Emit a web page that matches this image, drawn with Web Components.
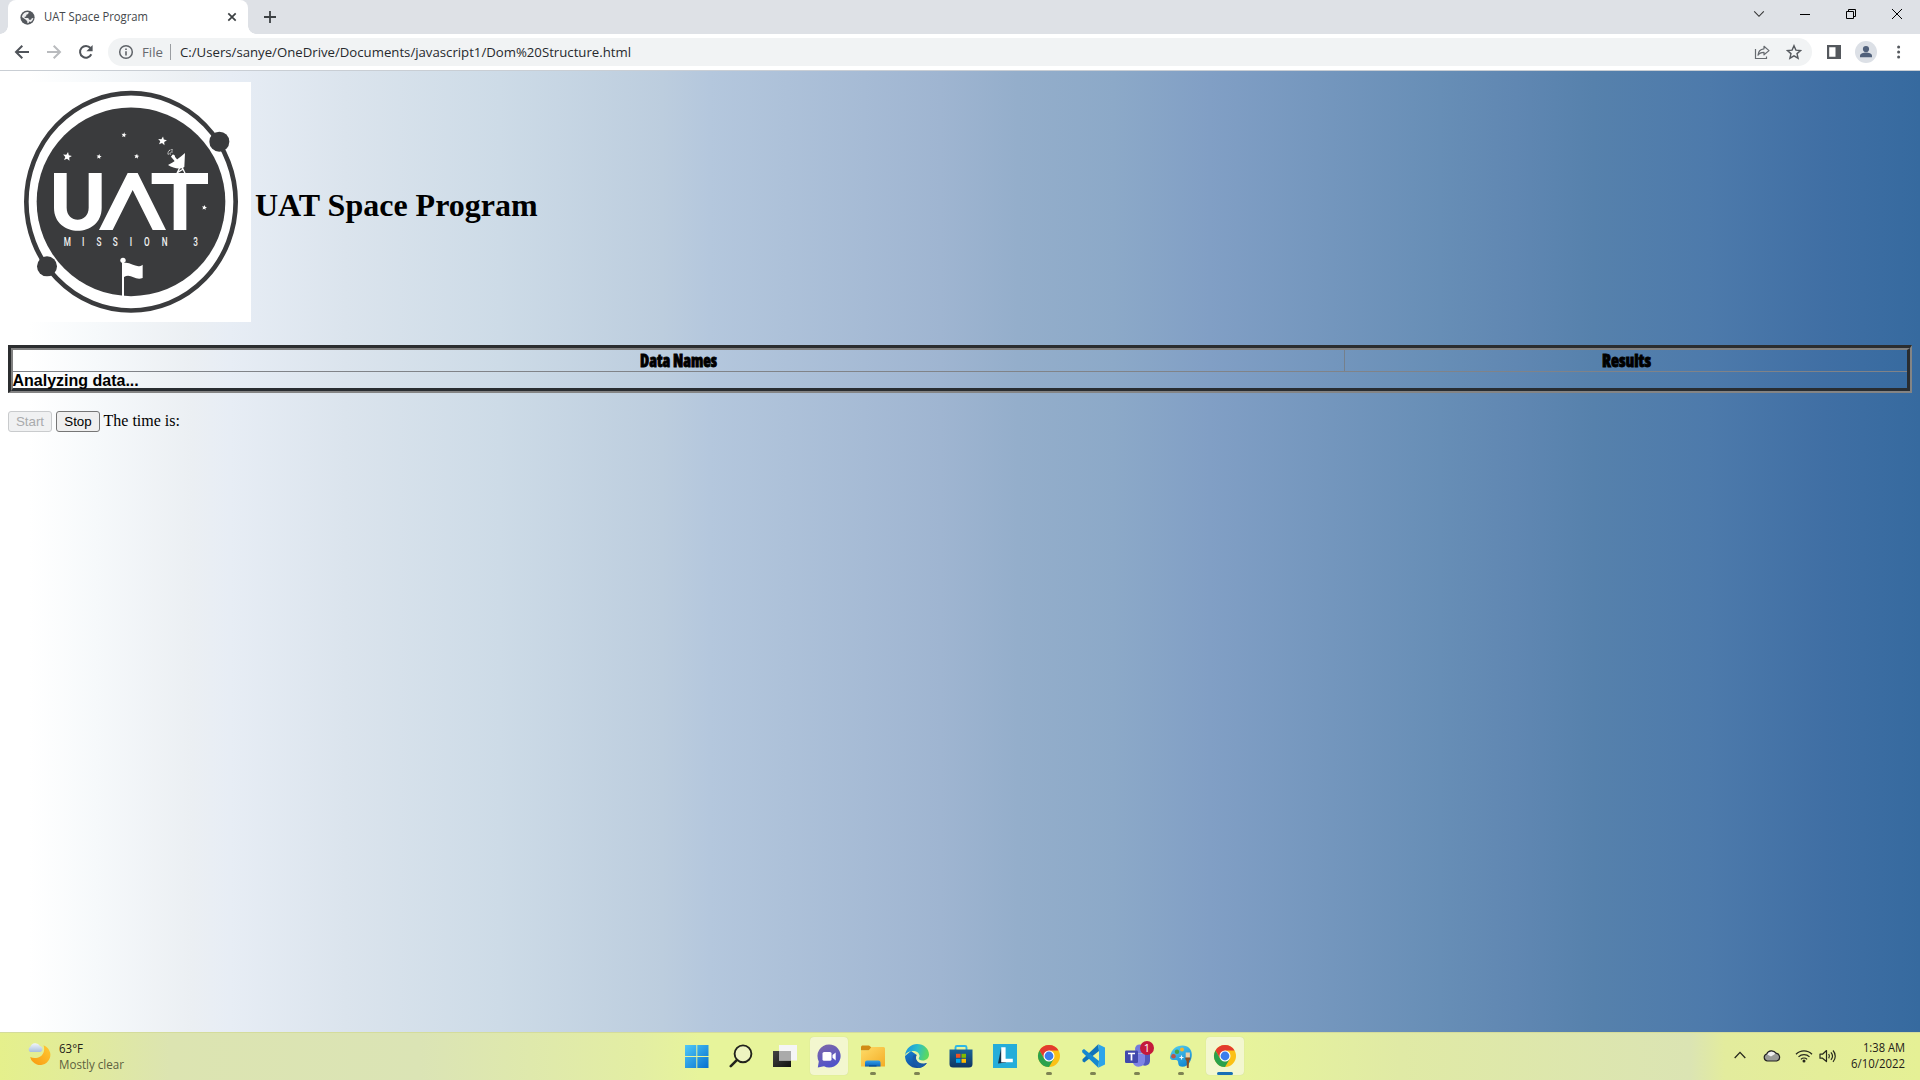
<!DOCTYPE html>
<html lang="en">
<head>
<meta charset="utf-8">
<title>UAT Space Program</title>
<style>
html,body{margin:0;padding:0;width:1920px;height:1080px;overflow:hidden}
</style>
</head>
<body>
<desktop-screen></desktop-screen>
<script>
const define=(name,html,after)=>{
  const t=document.createElement('template');t.innerHTML=html;
  customElements.define(name,class extends HTMLElement{
    connectedCallback(){
      if(this.shadowRoot)return;
      this.attachShadow({mode:'open'}).appendChild(t.content.cloneNode(true));
      if(after)after(this,this.shadowRoot);
    }
  });
};

/* Text squeezed or stretched horizontally to an exact width: <fit-text w="80"> */
define('fit-text',`<style>
:host{display:block;white-space:nowrap;flex:none}
span{display:inline-block;transform-origin:0 50%;white-space:nowrap}
</style><span><slot></slot></span>`,(el,root)=>{
  const s=root.querySelector('span'),w=+el.getAttribute('w');
  el.style.width=w+'px';
  s.style.transform='scaleX('+(w/s.getBoundingClientRect().width)+')';
});

/* Icon set */
const chromeIcon=`<circle cx="12" cy="12" r="11" fill="#fbc116"/><path d="M12 1a11 11 0 0 1 9.530 5.500H12L7.300 14.700 2.470 6.500A11 11 0 0 1 12 1Z" fill="#e33b2e"/><path d="M2.470 6.500 7.200 14.700 12 17.500 16.800 14.800 12 23A11 11 0 0 1 2.470 6.500Z" fill="#2ba24c"/><circle cx="12" cy="12" r="5.500" fill="#fff"/><circle cx="12" cy="12" r="4.400" fill="#3b7ded"/>`;
const icons={
globe:['0 0 16 16','<circle cx="8" cy="8" r="7.600" fill="#54585d"/><path d="M9.300 2.200 8.700 4.200 6.800 5 6.500 6.800 4.900 7.300 5 8.500h3.800l.9 1.900 2-.1.900-1.500 1.700-.2a6 6 0 0 1-2.600 4.300l-1.900-.6-.6 1.500-1.300.3-.2-2.200-1.500-1.600L2 7.500A6 6 0 0 1 9.300 2.200Z" fill="#fff" opacity=".9"/>'],
x:['0 0 16 16','<path d="m4.300 4.300 7.400 7.400m0-7.400-7.400 7.400" stroke="#3c4043" stroke-width="1.700"/>'],
plus:['0 0 16 16','<path d="M8 2v12M2 8h12" stroke="#3c4043" stroke-width="1.800"/>'],
back:['0 0 16 16','<path d="M15 8H2.500M8.300 1.700 2 8l6.300 6.300" stroke="#50545a" stroke-width="2" fill="none"/>'],
fwd:['0 0 16 16','<path d="M1 8h12.500M7.700 1.700 14 8l-6.300 6.300" stroke="#b9bbbe" stroke-width="2" fill="none"/>'],
reload:['0 0 16 16','<path d="M13.300 10.300A5.900 5.900 0 1 1 12.500 4" fill="none" stroke="#50545a" stroke-width="2"/><path d="M14.600 1v6.200H8.400Z" fill="#50545a"/>'],
info:['0 0 16 16','<circle cx="8" cy="8" r="6.300" fill="none" stroke="#5f6368" stroke-width="1.500"/><path d="M8 7.200v4.200M8 4.400v1.700" stroke="#5f6368" stroke-width="1.600"/>'],
chev:['0 0 12 12','<path d="m1.200 3.300 4.800 5 4.800-5" fill="none" stroke="#333" stroke-width="1.100"/>'],
min:['0 0 12 12','<path d="M1 6.500h10" stroke="#000" stroke-width="1"/>'],
restore:['0 0 12 12','<path d="M1.500 3.500h7v7h-7zM3.500 3.500v-2h7v7h-2" fill="none" stroke="#000" stroke-width="1"/>'],
close:['0 0 12 12','<path d="m1 1 10 10M11 1 1 11" stroke="#000" stroke-width="1"/>'],
share:['0 0 16 16','<path d="M1.500 5v9.500h11v-2" fill="none" stroke="#676b70" stroke-width="1.200"/><path d="M10 2.300 15 6.600l-5 4.200V8.300c-3 0-4.900.8-6 2.900.2-3.400 2.300-6 6-6.400Z" fill="none" stroke="#676b70" stroke-width="1.200" stroke-linejoin="round"/>'],
star:['0 0 16 16','<path d="m8 1.700 1.900 4.400 4.700.4-3.600 3.100 1.100 4.600L8 11.800l-4.100 2.400L5 9.600 1.400 6.500l4.700-.4Z" fill="none" stroke="#55595e" stroke-width="1.400"/>'],
panel:['0 0 14 14','<path d="M0 0h14v14H0ZM2.200 2.200v9.600h6.300V2.200Z" fill="#54585d" fill-rule="evenodd"/>'],
user:['0 0 22 22','<circle cx="11" cy="11" r="11" fill="#dce0e6"/><circle cx="11" cy="8" r="3.100" fill="#51617b"/><path d="M5 16.300v-1.500c0-2.200 3.500-3.300 6-3.300s6 1.100 6 3.300v1.500Z" fill="#51617b"/>'],
dots:['0 0 16 16','<g fill="#54585d"><circle cx="7.600" cy="3" r="1.500"/><circle cx="7.600" cy="8" r="1.500"/><circle cx="7.600" cy="13" r="1.500"/></g>'],
weather:['0 0 24 24','<defs><linearGradient id="a" x1="1" x2="0" y2="1"><stop stop-color="#ffcb35"/><stop offset="1" stop-color="#f8980f"/></linearGradient><linearGradient id="b" x2="0" y2="1"><stop stop-color="#f1f5fa"/><stop offset="1" stop-color="#a9c0dd"/></linearGradient></defs><path d="M16.500 3.200c2 5.500-.5 11.300-6 12.500a11 11 0 0 1-7.300-.8A10.200 10.200 0 1 0 16.500 3.200Z" fill="url(#a)"/><path d="M3 10a3 3 0 0 1 .3-5.200A5.300 5.300 0 0 1 13 4a3.100 3.100 0 0 1 .3 6Z" fill="url(#b)"/>'],
win:['0 0 24 24','<defs><linearGradient id="a" x2="1" y2="1"><stop stop-color="#4fc9f8"/><stop offset="1" stop-color="#0670cf"/></linearGradient></defs><path d="M0 1h11.300v11H0Zm12.300 0H23.500v11H12.300ZM0 13h11.300v11H0Zm12.300 0H23.500v11H12.300Z" fill="url(#a)"/>'],
search:['0 0 24 24','<circle cx="14" cy="9.800" r="8.400" fill="#edf4c0" stroke="#22231c" stroke-width="1.900"/><path d="m7.800 16.200-6 6" stroke="#22231c" stroke-width="2.600" stroke-linecap="round"/>'],
task:['0 0 24 24','<defs><linearGradient id="a" x2="1" y2="1"><stop stop-color="#444"/><stop offset="1" stop-color="#111"/></linearGradient></defs><path d="M0 7h18v16H0Z" fill="url(#a)"/><path d="M6 1h18v15.500H6Z" fill="#f5f5f5"/><path d="M6 7h12v9.500H6Z" fill="#aaa"/>'],
chat:['0 0 24 24','<defs><linearGradient id="a" x2=".4" y2="1"><stop stop-color="#8068a8"/><stop offset="1" stop-color="#5053c9"/></linearGradient></defs><path d="M12 .500a11.500 11.500 0 1 1-5 21.800L.800 23.400l1-6A11.500 11.500 0 0 1 12 .500Z" fill="url(#a)"/><rect x="5.500" y="8" width="9" height="8.800" rx="1.600" fill="#fff"/><path d="m15.500 11 3.200-2.600v8l-3.200-2.600Z" fill="#fff"/>'],
folder:['0 0 24 24','<defs><linearGradient id="a" x2="1" y2="1"><stop stop-color="#ffdc68"/><stop offset="1" stop-color="#f3ad27"/></linearGradient><linearGradient id="b" x2="0" y2="1"><stop stop-color="#34a1e9"/><stop offset="1" stop-color="#0961b8"/></linearGradient></defs><path d="M0 3.500C0 2 .7 1.500 2 1.500h6L10.500 3.500v3H0Z" fill="#d18b14"/><path d="M0 6.500h7.500L10.500 3H22.500A1.500 1.500 0 0 1 24 4.500v18H0Z" fill="url(#a)"/><path d="M4 22.500v-4a2 2 0 0 1 2-2h11.500a2 2 0 0 1 2 2v4Z" fill="url(#b)"/><path d="M8 22.500v-1.300h7.500v1.300Z" fill="#064f96"/>'],
edge:['0 0 24 24','<defs><linearGradient id="a" x2="1" y2=".2"><stop stop-color="#178fdf"/><stop offset=".55" stop-color="#2bbec9"/><stop offset="1" stop-color="#5bd860"/></linearGradient><linearGradient id="b" x2=".5" y2="1"><stop stop-color="#1680d2"/><stop offset="1" stop-color="#134b99"/></linearGradient></defs><path d="M0 12A12 12 0 0 0 12 24c4.500 0 8-2 10-5.300-2 1-4.500 1.600-7 .8-4-1.200-4.800-5-3.200-8.500L6 7Z" fill="url(#b)"/><path d="M0 11.500C1 4 6.500 0 12 0c7 0 12 5 12 10.500 0 3.700-2.900 6-6.300 6-2.600 0-4.200-1.100-4.200-2 0-.5.900-1.100.9-2.700 0-3-3.300-5-7-4.700C3.500 7.400.9 9 0 11.500Z" fill="url(#a)"/><path d="M8.300 11.200c-2.300 5 1.200 11.300 6.200 12.500 3-.4 6-2.500 7.500-5-4.600 2.200-10 .3-10.800-4.200-.2-1.300.2-2.500.8-3.500Z" fill="#175aa8"/><path d="M12.300 10.500c-1.400 1.500-1.600 4-.2 5.800 2 2.600 6.500 3.500 9.900 2.400 1-.3.400-1.400-.6-1.400-3.500.500-7.900-.6-7.900-2.800 0-.5.900-1.100.9-2.700 0-.7-.8-1.500-2.100-1.300Z" fill="#e8f4b8"/>'],
store:['0 0 24 24','<defs><linearGradient id="a" x2="0" y2="1"><stop stop-color="#196398"/><stop offset="1" stop-color="#103562"/></linearGradient></defs><path d="M6.500 7V3.500A1.500 1.500 0 0 1 8 2h8a1.500 1.500 0 0 1 1.500 1.500V7" fill="none" stroke="#2db7e8" stroke-width="1.900"/><path d="M.500 5.500h23V20a3.500 3.500 0 0 1-3.500 3.500H4A3.500 3.500 0 0 1 .500 20Z" fill="url(#a)"/><path d="M7 9.800h4.500v4H7Z" fill="#f05123"/><path d="M12.500 9.800H17v4h-4.500Z" fill="#80bb01"/><path d="M7 14.800h4.500v4H7Z" fill="#02a4ee"/><path d="M12.500 14.800H17v4h-4.500Z" fill="#ffb902"/>'],
el:['0 0 24 24','<path d="M0 0h24v24H0Z" fill="#25add9"/><path d="M8.200 3.500 5 19.500l8-1Z" fill="#14334a"/><path d="M8.200 3.200h4.400v11.500h7.200V18.300H8.200Z" fill="#fff"/>'],
chrome:['0 0 24 24',chromeIcon],
code:['0 0 24 24','<path d="m17.300.3-15.800 15v2l1.800 1.300L18 7Z" fill="#0f73b9"/><path d="M17.300 23.700 1.200 8.200v-2L3 5l15 12Z" fill="#1588d0"/><path d="M17.300.3 18 7v10l-.7 6.700L24 20.500V3.500Z" fill="#2ca4ea"/>'],
teams:['0 0 30 24','<circle cx="14.500" cy="5" r="4.500" fill="#7479dd"/><circle cx="22" cy="6" r="3.200" fill="#5159bd"/><path d="M17.500 9.500H25V17a5 5 0 0 1-7.500 4Z" fill="#5159bd"/><path d="M8 9.500h12V17a6.300 6.300 0 0 1-12 2Z" fill="#7d83e5"/><rect y="6.500" width="13" height="12.500" rx="1.200" fill="#4149ad"/><path d="M3 9.500h7M6.500 9.500v7" stroke="#fff" stroke-width="1.700"/>'],
paint:['0 0 24 24','<defs><linearGradient id="a" x2=".5" y2="1"><stop stop-color="#56d2f1"/><stop offset="1" stop-color="#168bd3"/></linearGradient></defs><path d="M13.500 1.500c6 0 9.300 4 9.300 9S20 22.800 13.500 22.800c-4.500 0-4-3-4.500-5-.5-2.500-3-1.500-5.500-1.800C1 15.500.7 13.800 1.200 12 2.500 5.500 7 1.500 13.500 1.500Z" fill="url(#a)"/><circle cx="8" cy="7.800" r="2.200" fill="#44a646"/><circle cx="13" cy="5.500" r="2" fill="#f3b52b"/><circle cx="4.500" cy="12.300" r="2.300" fill="#ba5449"/><path d="M12.500 11.500v4M10.500 13.500h4" stroke="#effaff" stroke-width="1.200"/><path d="M16.700 8.500h4.200v5.300h-4.200Z" fill="#edcfa8"/><path d="M16.300 13.500h5v1.500l-1.300 2-.3 7h-1.800l-.3-7-1.300-2Z" fill="#8a4e23"/>'],
up:['0 0 12 12','<path d="m.700 9 5.300-5.600L11.300 9" fill="none" stroke="#26281c" stroke-width="1.300"/>'],
cloud:['0 0 18 14','<path d="M4.500 12A3.600 3.600 0 0 1 3.700 5 5.300 5.300 0 0 1 13 4.200a4 4 0 0 1 .8 7.800Z" fill="#9a9c98" stroke="#222" stroke-width="1.200"/><path d="M4.200 5.600A4.600 4.600 0 0 1 12.300 4.800L8 7.500Z" fill="#eee"/>'],
wifi:['0 0 18 14','<g fill="none" stroke="#26281c" stroke-width="1.300"><path d="M1 5.200a11.300 11.300 0 0 1 16 0M3.500 7.900a7.800 7.800 0 0 1 11 0M5.900 10.400a4.400 4.400 0 0 1 6.200 0"/></g><circle cx="9" cy="12" r="1.500" fill="#26281c"/>'],
sound:['0 0 18 14','<g fill="none" stroke="#26281c" stroke-width="1.200"><path d="M1 5.200v4h2.500L7.500 12.500v-11L3.500 5.200Z" stroke-linejoin="round"/><path d="M9.700 5c.9 1.300.9 3 0 4.300M11.900 3.300c2 2.300 2 5.300 0 7.600M14 1.500c3 3.300 3 8 0 11.300"/></g>']
};
customElements.define('ui-icon',class extends HTMLElement{
  connectedCallback(){
    if(this.shadowRoot)return;
    const [vb,body]=icons[this.getAttribute('name')];
    const w=this.getAttribute('w')||16,h=this.getAttribute('h')||w;
    this.attachShadow({mode:'open'}).innerHTML=`<style>:host{display:block;flex:none;width:${w}px;height:${h}px}svg{display:block}</style><svg width="${w}" height="${h}" viewBox="${vb}">${body}</svg>`;
  }
});

define('tab-strip',`<style>
:host{display:flex;height:34px;background:#dee1e6;font:12px/16px "Open Sans",sans-serif;color:#44474b}
.tab{position:relative;display:flex;align-items:center;width:240px;box-sizing:border-box;margin-left:8px;padding:0 8px 0 12px;background:#fff;border-radius:8px 8px 0 0}
.tab:before,.tab:after{content:"";position:absolute;bottom:0;width:8px;height:8px}
.tab:before{left:-8px;background:radial-gradient(circle at 0 0,transparent 7.500px,#fff 8px)}
.tab:after{right:-8px;background:radial-gradient(circle at 100% 0,transparent 7.500px,#fff 8px)}
fit-text{margin:0 auto 0 9px}
.new{margin:9px 0 0 14px}
.win{display:flex;gap:34px;margin:8px 17px 0 auto}
</style>
<div class="tab"><ui-icon name="globe" w="15"></ui-icon><fit-text w="104">UAT Space Program</fit-text><ui-icon name="x" w="16"></ui-icon></div>
<ui-icon class="new" name="plus" w="16"></ui-icon>
<div class="win"><ui-icon name="chev" w="12"></ui-icon><ui-icon name="min" w="12"></ui-icon><ui-icon name="restore" w="12"></ui-icon><ui-icon name="close" w="12"></ui-icon></div>`);

define('tool-bar',`<style>
:host{display:flex;align-items:center;height:36px;box-sizing:border-box;padding-left:14px;background:#fff;font:13px/18px "Open Sans",sans-serif;color:#26292d}
.nav{display:flex;gap:16px;width:94px}
.box{display:flex;align-items:center;box-sizing:border-box;width:1704px;height:28px;border-radius:14px;background:#f1f3f4;padding:0 10px}
.sep{width:1px;height:16px;background:#9a9da1;margin:0 9px 0 7px}
.file{margin-left:8px;color:#66696e}
.share{margin-left:auto;margin-right:16px}
.right{display:flex;align-items:center;margin-left:15px}
</style>
<div class="nav"><ui-icon name="back"></ui-icon><ui-icon name="fwd"></ui-icon><ui-icon name="reload"></ui-icon></div>
<div class="box"><ui-icon name="info"></ui-icon><fit-text class="file" w="21">File</fit-text><div class="sep"></div><fit-text w="451">C:/Users/sanye/OneDrive/Documents/javascript1/Dom%20Structure.html</fit-text><ui-icon class="share" name="share"></ui-icon><ui-icon name="star"></ui-icon></div>
<div class="right"><ui-icon name="panel" w="14"></ui-icon><ui-icon name="user" w="22" style="margin:0 14px"></ui-icon><ui-icon name="dots"></ui-icon></div>`);

const star=(x,y,r)=>{let p='';for(let i=0;i<10;i++){const a=-Math.PI/2+i*Math.PI/5+.15,q=i%2?r*.45:r;p+=(i?'L':'M')+(x+q*Math.cos(a)).toFixed(1)+' '+(y+q*Math.sin(a)).toFixed(1)}return `<path d="${p}Z"/>`};
define('mission-logo',`<style>:host{display:block;flex:none;width:243px;height:240px}svg{display:block}text{font:500 30px "Roboto",sans-serif}</style>
<svg width="243" height="240" viewBox="24 21 729 720">
<path d="M24 21H753V741H24Z" fill="#fff"/>
<ellipse cx="393" cy="380.500" rx="314" ry="326" fill="none" stroke="#3a3b3d" stroke-width="14"/>
<g fill="#3a3b3d"><circle cx="393" cy="380.500" r="283"/><circle cx="658" cy="200" r="30"/><circle cx="141" cy="574" r="30"/></g>
<g fill="#fff">
<path d="M162 294H200V398C200 446 266 446 266 398V294H305V398C305 490 162 490 162 398Z"/>
<path d="M297 465 383 294H413L498 465H458L398 345 338 465Z"/>
<path d="M455 294H624V327H559V465H521V327H455Z"/>
${star(372,180,8)}${star(487,198,14)}${star(202,245,14)}${star(297,245,8)}${star(410,244,8)}${star(613,398,8)}
<path d="M504 270C521 281 541 284 553 276L555 234C541 246 522 261 504 270Z"/>
<path d="m519 238 20 25-7 5-19-23Z"/><circle cx="520" cy="244" r="5"/>
<path d="M531 295 543 270 555 295M533 292 550 282" fill="none" stroke="#fff" stroke-width="4"/>
<path d="M505 239C501 229 510 222 519 225M511 239C508 233 513 230 518 231" fill="none" stroke="#fff" stroke-width="2.500" stroke-dasharray="7 2"/>
<circle cx="369" cy="556" r="8"/><path d="M366 560h6v104h-6Z"/>
<path d="M372 564C392 559 409 583 428 569V609C405 618 393 594 372 606Z"/>
</g>
<g fill="#f2f2f2" transform="translate(0 514) scale(.82 1.260)" text-anchor="middle"><text x="246">M</text><text x="304">I</text><text x="362">S</text><text x="422">S</text><text x="479">I</text><text x="537">O</text><text x="602">N</text><text x="716">3</text></g>
</svg>`);

define('data-table',`<style>
:host{display:block;border:solid;border-width:3px 2px 2px 3px;border-color:#2b2d2f #848484 #848484 #2b2d2f}
.in{border:solid;border-width:2px 3px 3px 2px;border-color:#808080 #292d31 #292d31 #808080;height:38px}
.row{display:flex;height:21px;border-bottom:1px solid #808388}
.row>div{display:flex;justify-content:center}
.a{width:1331px;border-right:1px solid #75808c}
.b{flex:1}
.row fit-text{font:800 17px/21px "Open Sans",sans-serif;font-stretch:75%;color:#000;-webkit-text-stroke:.8px #000}
.msg{font:bold 16px/17px "Liberation Sans",sans-serif;color:#000;height:16px;white-space:nowrap;margin-left:-.5px}
</style>
<div class="in"><div class="row"><div class="a"><fit-text w="77">Data Names</fit-text></div><div class="b"><fit-text w="49">Results</fit-text></div></div><div class="msg">Analyzing data...</div></div>`);

define('push-button',`<style>
:host{display:block;flex:none}
button{display:block;box-sizing:border-box;width:44px;height:21px;padding:0;border:1px solid #767676;border-radius:3px;background:#efefef;color:#000;font:13.333px/19px "Liberation Sans",sans-serif}
:host([disabled]) button{border-color:#c9cbcd;color:#a9abad;background:#f0f1f2}
</style><button><slot></slot></button>`);

define('space-page',`<style>
:host{display:block;box-sizing:border-box;height:962px;border-top:1px solid #c9ced4;padding:11px 8px 0;color:#000;font:16px/18px "Liberation Serif",serif;
background:linear-gradient(90deg,#fff 0,#fff 1.500%,#f6f9fb 5%,#ebeff3 10%,#e7edf5 12%,#dbe4ed 18%,#cddbe7 26%,#bccdde 34.500%,#b4c7dd 37%,#9fb5d1 49%,#94aecb 53%,#8ca9c8 58%,#819fc5 63%,#678eb6 75%,#6087b2 79%,#5681ac 83%,#4d7aab 89%,#406fa4 95%,#366a9f 100%)}
.hero{display:flex;align-items:center}
h1{margin:6px 0 0 4px;font:bold 32px/37px "Liberation Serif",serif;white-space:nowrap}
data-table{margin-top:23px}
.ctl{display:flex;gap:4px;margin-top:18px}
.ctl span{line-height:19px;margin-left:-.5px}
</style>
<div class="hero"><mission-logo></mission-logo><h1>UAT Space Program</h1></div>
<data-table></data-table>
<div class="ctl"><push-button disabled>Start</push-button><push-button>Stop</push-button><span>The time is:</span></div>`);

define('task-item',`<style>
:host{display:flex;position:relative;width:44px;height:48px;flex:none;justify-content:center;box-sizing:border-box;padding-top:12px}
:host([active]):before{content:"";position:absolute;left:3px;top:5px;width:38px;height:38px;border-radius:4px;background:#f3f7cf;box-shadow:0 0 1px #c4cc9b}
slot{display:block;position:relative}
i{display:none;position:absolute;top:40px;left:19px;width:6px;height:3px;border-radius:2px;background:#7e8353}
:host([open]) i{display:block}
:host([focused]) i{left:14px;width:16px;background:#176fb5}
b{position:absolute;left:25px;top:9px;width:14px;height:14px;border-radius:50%;background:#c4193b;color:#fff;font:11px/14px "Open Sans",sans-serif;text-align:center}
</style><slot></slot><i></i>`,(el,root)=>{
  if(el.hasAttribute('badge')){const b=document.createElement('b');b.textContent=el.getAttribute('badge');root.append(b)}
});

const item=(name,attrs='')=>`<task-item ${attrs}><ui-icon name="${name}" w="24"></ui-icon></task-item>`;
define('task-bar',`<style>
:host{display:flex;height:48px;box-sizing:border-box;border-top:1px solid #d4dc9c;font:12px/16px "Open Sans",sans-serif;color:#1f2118;
background:linear-gradient(90deg,#e5f08c 0,#e2ec99 70px,#dce4b1 170px,#dbe4b5 420px,#e3eea3 640px,#e7f49b 700px,#e7f49b 1240px,#e0eaa5 1400px,#dbe4b3 1690px,#e3ec9d 1725px,#e5f095 1920px)}
.left{display:flex;width:675px;box-sizing:border-box;padding:8px 0 0 27px;gap:8px}
.left .t{display:flex;flex-direction:column}
.apps{display:flex;margin-top:-1px}
.wide{margin-right:-6px}
.tray{display:flex;margin-left:auto;padding-right:15px}
.tray ui-icon{margin-top:16px}
.clock{display:flex;flex-direction:column;align-items:flex-end;width:54px;margin:7px 0 0 14px}
</style>
<div class="left"><ui-icon name="weather" w="24" style="margin-top:1px"></ui-icon><div class="t"><fit-text w="24">63°F</fit-text><fit-text w="65" style="color:#5c6140">Mostly clear</fit-text></div></div>
<div class="apps">${item('win')}${item('search')}${item('task')}${item('chat','active')}${item('folder','open')}${item('edge','open')}${item('store')}${item('el')}${item('chrome','open')}${item('code','open')}<task-item open badge="1"><ui-icon class="wide" name="teams" w="30" h="24"></ui-icon></task-item>${item('paint','open')}${item('chrome','active open focused')}</div>
<div class="tray"><ui-icon name="up" w="12" style="margin-right:17px"></ui-icon><ui-icon name="cloud" w="18" h="14" style="margin-right:14px"></ui-icon><ui-icon name="wifi" w="18" h="14" style="margin-right:6px"></ui-icon><ui-icon name="sound" w="18" h="14"></ui-icon>
<div class="clock"><fit-text w="42">1:38 AM</fit-text><fit-text w="54">6/10/2022</fit-text></div></div>`);

define('desktop-screen',`<style>:host{display:flex;flex-direction:column;width:1920px;height:1080px;overflow:hidden}tab-strip,tool-bar,space-page,task-bar{flex:none}</style>
<tab-strip></tab-strip><tool-bar></tool-bar><space-page></space-page><task-bar></task-bar>`);
</script>
</body>
</html>
